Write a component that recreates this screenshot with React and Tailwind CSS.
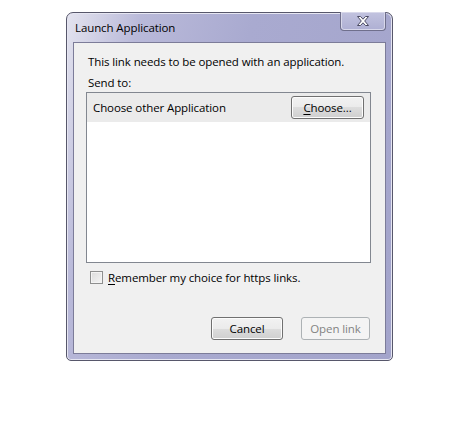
import React, { useState } from 'react';

const font = { fontFamily: '"Open Sans", "Noto Sans", sans-serif' };

const CloseGlyph = () => (
  <svg width="14" height="12" viewBox="0 0 14 12">
    <path
      d="M1.5 1.5 L4.5 1.5 L7 4.2 L9.5 1.5 L12.5 1.5 L8.7 6 L12.5 10.5 L9.5 10.5 L7 7.8 L4.5 10.5 L1.5 10.5 L5.3 6 Z"
      fill="#ffffff"
      stroke="#4b4b63"
      strokeWidth="1"
      strokeLinejoin="round"
    />
  </svg>
);

const Button = ({ children, disabled, className = '' }) => (
  <button
    disabled={disabled}
    className={`h-[23px] rounded-[3px] border text-[11.5px] tracking-[-0.1px] leading-none ${
      disabled
        ? 'border-[#adb2b5] bg-[#f4f4f4] text-[#838383]'
        : 'border-[#707070] bg-[linear-gradient(#f2f2f2_0%,#ebebeb_50%,#dddddd_50%,#cfcfcf_100%)] text-black shadow-[inset_0_0_0_1px_#fcfcfc]'
    } ${className}`}
  >
    {children}
  </button>
);

const App = () => {
  const [remember, setRemember] = useState(false);

  return (
    <div className="w-[470px] h-[425px] bg-white pt-[12px] pl-[66px] text-[11.5px] tracking-[-0.1px]" style={font}>
      {/* Window frame */}
      <div className="w-[327px] h-[349px] flex flex-col rounded-t-[7px] rounded-b-[5px] border border-[#57576b] bg-[linear-gradient(105deg,#e4e4ef_0%,#b9b9d9_18%,#a9aad0_45%,#a3a4cb_100%)] shadow-[inset_0_0_0_1px_#e6e6f2] px-[6px] pb-[6px]">
        {/* Title bar */}
        <div className="h-[29px] flex items-start justify-between">
          <span className="pt-[6px] pl-[2px] text-black">Launch Application</span>
          <div className="w-[46px] h-[19px] -mt-px flex items-center justify-center rounded-b-[4px] border border-[#6f6f8c] border-t-0 bg-[linear-gradient(#c2c3df,#aeafd3)] shadow-[inset_0_0_0_1px_#d8d8ea]">
            <CloseGlyph />
          </div>
        </div>

        {/* Client area */}
        <div className="flex-1 border border-[#7c7c99] bg-[#f0f0f0] flex flex-col pl-[12px] pr-[14px]">
          <p className="pt-[11px] pl-[2px] leading-[16px] text-black">
            This link needs to be opened with an application.
          </p>
          <p className="pt-[5px] pl-[2px] leading-[16px] text-black">Send to:</p>

          {/* Handler list */}
          <div className="mt-[1px] h-[171px] border border-[#828790] bg-white">
            <div className="h-[29px] bg-[#ebebeb] flex items-center justify-between pl-[6px] pr-[6px]">
              <span className="text-black">Choose other Application</span>
              <Button className="w-[73px]">
                <span className="underline underline-offset-2">C</span>hoose...
              </Button>
            </div>
          </div>

          {/* Remember checkbox */}
          <label className="mt-[6px] ml-[4px] flex items-center gap-[5px] text-black">
            <span
              onClick={() => setRemember(!remember)}
              className="w-[13px] h-[13px] border border-[#8e8f8f] bg-[linear-gradient(135deg,#dcdcdc,#f5f5f5)] shadow-[inset_0_0_0_1px_#f4f4f4] flex items-center justify-center"
            >
              {remember && <span className="text-[10px] leading-none">✓</span>}
            </span>
            <span>
              <span className="underline underline-offset-2">R</span>emember my choice for https links.
            </span>
          </label>

          {/* Buttons */}
          <div className="mt-auto mb-[13px] flex justify-end gap-[18px] pr-[1px]">
            <Button className="w-[72px]">Cancel</Button>
            <Button disabled className="w-[69px]">Open link</Button>
          </div>
        </div>
      </div>
    </div>
  );
};

export default App;
